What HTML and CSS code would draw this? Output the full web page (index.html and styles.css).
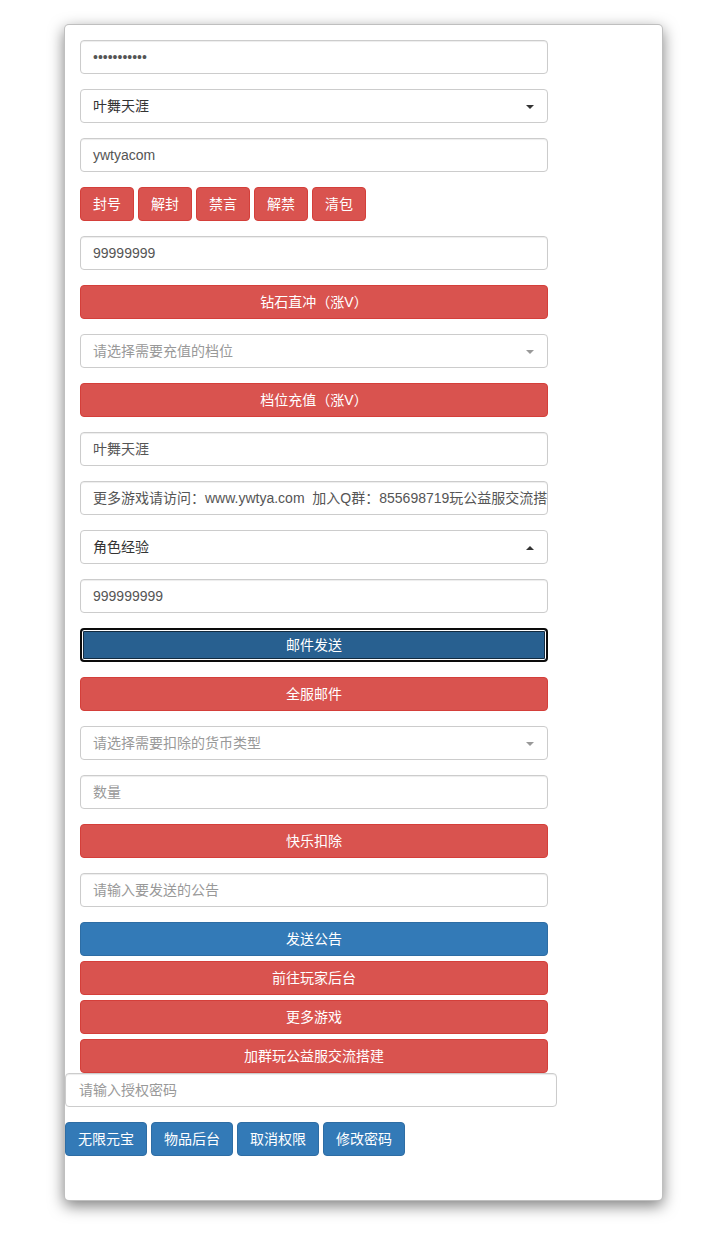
FILE: index.html
```html
<!DOCTYPE html>
<html lang="zh-CN">
<head>
<meta charset="utf-8">
<title>GM</title>
<link rel="stylesheet" href="styles.css">
</head>
<body>
<div class="card">
  <div class="panel">
    <div class="group"><div class="field">•••••••••••</div></div>
    <div class="group"><div class="field select dark">叶舞天涯<span class="caret"></span></div></div>
    <div class="group"><div class="field">ywtyacom</div></div>
    <div class="group row">
      <button class="btn red">封号</button>
      <button class="btn red">解封</button>
      <button class="btn red">禁言</button>
      <button class="btn red">解禁</button>
      <button class="btn red">清包</button>
    </div>
    <div class="group"><div class="field">99999999</div></div>
    <div class="group"><button class="btn red block">钻石直冲（涨V）</button></div>
    <div class="group"><div class="field select ph">请选择需要充值的档位<span class="caret grey"></span></div></div>
    <div class="group"><button class="btn red block">档位充值（涨V）</button></div>
    <div class="group"><div class="field">叶舞天涯</div></div>
    <div class="group"><div class="field clip">更多游戏请访问：www.ywtya.com&nbsp;&nbsp;加入Q群：855698719玩公益服交流搭建</div></div>
    <div class="group"><div class="field select dark">角色经验<span class="caret up"></span></div></div>
    <div class="group"><div class="field">999999999</div></div>
    <div class="group"><button class="btn focus block">邮件发送</button></div>
    <div class="group"><button class="btn red block">全服邮件</button></div>
    <div class="group"><div class="field select ph">请选择需要扣除的货币类型<span class="caret grey"></span></div></div>
    <div class="group"><div class="field ph">数量</div></div>
    <div class="group"><button class="btn red block">快乐扣除</button></div>
    <div class="group"><div class="field ph">请输入要发送的公告</div></div>
    <div class="stack">
      <button class="btn blue block">发送公告</button>
      <button class="btn red block">前往玩家后台</button>
      <button class="btn red block">更多游戏</button>
      <button class="btn red block">加群玩公益服交流搭建</button>
    </div>
  </div>
  <div class="auth">
    <div class="field wide ph">请输入授权密码</div>
    <div class="row tools">
      <button class="btn blue">无限元宝</button>
      <button class="btn blue">物品后台</button>
      <button class="btn blue">取消权限</button>
      <button class="btn blue">修改密码</button>
    </div>
  </div>
</div>
</body>
</html>
```

FILE: styles.css
```css
html, body {
  margin: 0;
  padding: 0;
  background: #fff;
}
body {
  font-family: "Liberation Sans", "Noto Sans CJK SC", sans-serif;
  font-size: 14px;
  color: #333;
  padding-bottom: 40px;
}
.card {
  margin: 24px 0 0 64px;
  width: 599px;
  height: 1177px;
  border: 1px solid rgba(0,0,0,.25);
  border-radius: 5px;
  box-shadow: 0 5px 15px rgba(0,0,0,.5);
  background: #fff;
  box-sizing: border-box;
}
.panel {
  padding: 15px 15px 0 15px;
}
.group {
  margin-bottom: 15px;
  width: 468px;
}
.row {
  display: flex;
  gap: 4px;
}
.field {
  position: relative;
  height: 34px;
  box-sizing: border-box;
  border: 1px solid #ccc;
  border-radius: 4px;
  box-shadow: inset 0 1px 1px rgba(0,0,0,.075);
  padding: 0 12px;
  line-height: 32px;
  color: #555;
  white-space: nowrap;
  overflow: hidden;
  background: #fff;
}
.field.dark { color: #333; }
.field.ph { color: #999; }
.field.select { box-shadow: none; }
.caret {
  position: absolute;
  right: 13px;
  top: 15px;
  width: 0;
  height: 0;
  border-left: 4px solid transparent;
  border-right: 4px solid transparent;
  border-top: 4px solid #333;
}
.caret.grey { border-top-color: #999; }
.caret.up {
  border-top: 0;
  border-bottom: 4px solid #333;
}
.btn {
  height: 34px;
  box-sizing: border-box;
  border: 1px solid transparent;
  border-radius: 4px;
  padding: 0 12px;
  font: inherit;
  font-size: 14px;
  color: #fff;
  line-height: 32px;
  cursor: pointer;
  white-space: nowrap;
}
.btn.red {
  background: #d9534f;
  border-color: #d43f3a;
}
.btn.blue {
  background: #337ab7;
  border-color: #2e6da4;
}
.btn.focus {
  background: #286090;
  border: 2px solid #0c0c0c;
  box-shadow: inset 0 0 0 1px #fff, inset 0 0 0 2px #122b40;
  line-height: 30px;
}
.btn.block {
  display: block;
  width: 100%;
}
.stack {
  width: 468px;
  display: flex;
  flex-direction: column;
  gap: 5px;
}
.auth {
  padding: 0;
}
.field.wide {
  width: 492px;
  padding-left: 13px;
}
.tools {
  margin-top: 15px;
}
```
